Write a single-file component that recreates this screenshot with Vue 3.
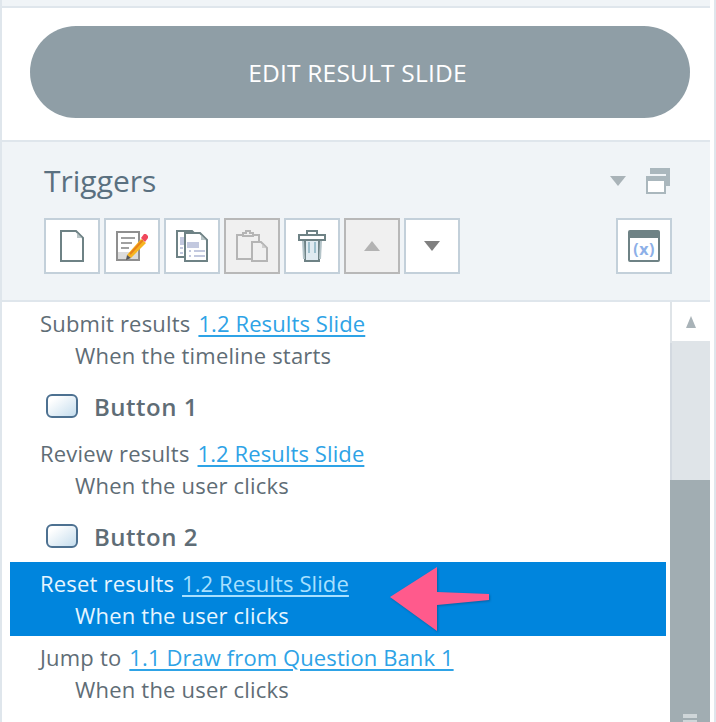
<template>
  <div class="panel">
    <div class="top-band"></div>
    <div class="edit-wrap">
      <button class="edit-btn">EDIT RESULT SLIDE</button>
    </div>

    <div class="triggers-head">
      <div class="title-row">
        <span class="title">Triggers</span>
        <div class="title-tools">
          <svg width="16" height="10" viewBox="0 0 16 10"><path d="M0 0h16L8 10z" fill="#a9b3b8" /></svg>
          <svg width="24" height="26" viewBox="0 0 24 26">
            <path d="M4 0h20v18h-4V6H4z" fill="#aab7bd" />
            <rect x="1" y="9" width="18" height="16" fill="#fff" stroke="#aab7bd" stroke-width="2" />
            <rect x="0" y="8" width="20" height="5" fill="#aab7bd" />
          </svg>
        </div>
      </div>
      <div class="toolbar">
        <div class="tool">
          <svg width="24" height="32" viewBox="0 0 24 32">
            <path d="M1 1h15l7 7v23H1z" fill="#fff" stroke="#6e8285" stroke-width="2" />
            <path d="M17 3v5h5z" fill="#b8c4c6" />
          </svg>
        </div>
        <div class="tool">
          <svg width="32" height="32" viewBox="0 0 32 32">
            <rect x="1" y="2" width="22" height="28" fill="#fff" stroke="#8f8f8f" stroke-width="2" />
            <path d="M5 8h14M5 13h11M5 18h8" stroke="#a0a0a0" stroke-width="2" />
            <rect x="2" y="22" width="20" height="7" fill="#dcdcdc" />
            <path d="M11 25L25 9l5 4-15 15z" fill="#f6b520" />
            <path d="M14 24L27 10" stroke="#e8811a" stroke-width="2" />
            <path d="M10 30l1-5 4 3z" fill="#555" />
            <path d="M25 8l3-4h2l2 2v2l-3 4z" fill="#f0485c" />
          </svg>
        </div>
        <div class="tool">
          <svg width="32" height="32" viewBox="0 0 32 32">
            <path d="M1 1h15l6 6v20H1z" fill="#fff" stroke="#6e8285" stroke-width="2" />
            <rect x="4" y="7" width="15" height="8" fill="#c3c9df" />
            <path d="M4 18h3M4 23h3" stroke="#c3c9df" stroke-width="2" />
            <path d="M9 3h15l7 7v21H9z" fill="#fff" stroke="#6e8285" stroke-width="2" />
            <path d="M25 5v5h5z" fill="#b8c4c6" />
            <rect x="11" y="12" width="12" height="6" fill="#c3c9df" />
            <path d="M13 21h2M18 21h11M13 26h2M18 26h11" stroke="#c3c9df" stroke-width="2" />
          </svg>
        </div>
        <div class="tool off">
          <svg width="32" height="32" viewBox="0 0 32 32">
            <path d="M1 5h22v24H1z" fill="none" stroke="#b5b5b5" stroke-width="2" />
            <path d="M7 5V3h3V1h4v2h3v3H7z" fill="#f0f0f0" stroke="#b5b5b5" stroke-width="2" />
            <path d="M16 12h9l6 6v13H16z" fill="#f0f0f0" stroke="#b5b5b5" stroke-width="2" />
            <path d="M26 14v4h4z" fill="#cfcfcf" />
          </svg>
        </div>
        <div class="tool">
          <svg width="28" height="32" viewBox="0 0 28 32">
            <path d="M9 5V1h10v4" fill="#fff" stroke="#6e8285" stroke-width="2" />
            <rect x="1" y="5" width="26" height="5" fill="#fff" stroke="#6e8285" stroke-width="2" />
            <path d="M7 10h14v21H7z" fill="#dfeaf0" stroke="#6e8285" stroke-width="2" />
            <path d="M5 11l1 18" stroke="#b4c4c9" stroke-width="2" />
            <path d="M23 11l-1 18" stroke="#b4c4c9" stroke-width="2" />
            <path d="M11 12v11M17 12v11" stroke="#9dbfcc" stroke-width="2" />
          </svg>
        </div>
        <div class="tool off">
          <svg width="16" height="10" viewBox="0 0 16 10"><path d="M0 10L8 0l8 10z" fill="#b3b3b3" /></svg>
        </div>
        <div class="tool">
          <svg width="16" height="10" viewBox="0 0 16 10"><path d="M0 0h16L8 10z" fill="#808080" /></svg>
        </div>
        <div class="tool var-tool">
          <div class="var-icon"><span>(x)</span></div>
        </div>
      </div>
    </div>

    <div class="list-area">
      <div class="list">
        <template v-for="(item, i) in items" :key="i">
          <div v-if="item.object" class="object-row">
            <svg width="32" height="24" viewBox="0 0 32 24">
              <defs>
                <linearGradient :id="'btn' + i" x1="0" y1="0" x2="1" y2="1">
                  <stop offset="0.2" stop-color="#ffffff" />
                  <stop offset="1" stop-color="#c2dbec" />
                </linearGradient>
              </defs>
              <rect x="1" y="1" width="30" height="22" rx="5" :fill="'url(#btn' + i + ')'" stroke="#4d7191" stroke-width="2" />
            </svg>
            <span>{{ item.object }}</span>
          </div>
          <div v-else class="trigger" :class="{ selected: item.selected }">
            <div class="line1">{{ item.action }} <a>{{ item.target }}</a></div>
            <div class="line2">{{ item.when }}</div>
          </div>
        </template>
      </div>
      <div class="scrollbar">
        <div class="scroll-up">
          <svg width="10" height="12" viewBox="0 0 10 12"><path d="M0 12L5 0l5 12z" fill="#a9b3b8" /></svg>
        </div>
        <div class="scroll-track"></div>
        <div class="scroll-thumb">
          <i></i><i></i>
        </div>
      </div>
      <svg class="arrow" width="112" height="72" viewBox="0 0 112 72">
        <path d="M6 33L53 3v25l52 2v6l-52 5v26z" fill="#ff5a8c" />
      </svg>
    </div>
  </div>
</template>

<script setup>
const items = [
  { action: 'Submit results', target: '1.2 Results Slide', when: 'When the timeline starts' },
  { object: 'Button 1' },
  { action: 'Review results', target: '1.2 Results Slide', when: 'When the user clicks' },
  { object: 'Button 2' },
  { action: 'Reset results', target: '1.2 Results Slide', when: 'When the user clicks', selected: true },
  { action: 'Jump to', target: '1.1 Draw from Question Bank 1', when: 'When the user clicks' }
]
</script>

<style>
html, body { margin: 0; background: #fff; }
</style>

<style scoped>
.panel {
  width: 716px;
  height: 722px;
  box-sizing: border-box;
  overflow: hidden;
  display: flex;
  flex-direction: column;
  background: #fff;
  border-left: 2px solid #dfe6ec;
  border-right: 2px solid #dfe6ec;
  padding-right: 4px;
  font-family: "Open Sans", "Liberation Sans", sans-serif;
}

.top-band {
  height: 6px;
  flex-shrink: 0;
  background: #f0f4f7;
  border-bottom: 2px solid #dfe6ec;
}

.edit-wrap {
  height: 134px;
  flex-shrink: 0;
  box-sizing: border-box;
  padding: 18px 20px 0 28px;
  border-bottom: 2px solid #dfe6ec;
}

.edit-btn {
  display: block;
  width: 660px;
  height: 92px;
  border: 0;
  padding: 0 5px 0 0;
  border-radius: 46px;
  background: #8f9ea6;
  color: #fff;
  font-family: inherit;
  font-size: 24.5px;
  font-weight: 500;
  letter-spacing: 0.2px;
}

.triggers-head {
  height: 160px;
  flex-shrink: 0;
  box-sizing: border-box;
  padding: 15px 38px 0 42px;
  background: #f0f4f7;
  border-bottom: 2px solid #dfe6ec;
}

.title-row {
  display: flex;
  align-items: center;
  justify-content: space-between;
  height: 46px;
  margin-bottom: 15px;
}

.title {
  font-size: 30px;
  color: #5a7080;
}

.title-tools {
  display: flex;
  align-items: center;
  gap: 20px;
  margin-right: 2px;
  padding-top: 2px;
}

.toolbar {
  display: flex;
  gap: 4px;
}

.tool {
  width: 56px;
  height: 56px;
  box-sizing: border-box;
  border: 2px solid #c3d0da;
  background: #fff;
  display: flex;
  align-items: center;
  justify-content: center;
}

.tool.off {
  background: #f0f0f0;
  border-color: #b8b8b8;
}

.var-tool {
  margin-left: auto;
}

.var-icon {
  width: 32px;
  height: 32px;
  box-sizing: border-box;
  border: 2px solid #6e8285;
  border-top-width: 8px;
  border-radius: 2px;
  display: flex;
  align-items: center;
  justify-content: center;
}

.var-icon span {
  font-size: 16px;
  letter-spacing: 0.5px;
  line-height: 20px;
  font-weight: 700;
  color: #8db0e8;
}

.list-area {
  position: relative;
  flex: 1;
  min-height: 0;
  display: flex;
}

.list {
  flex: 1;
  min-width: 0;
  padding-left: 8px;
  padding-right: 4px;
}

.trigger {
  padding: 5px 0 5px 30px;
  font-size: 22px;
  letter-spacing: 0.2px;
  line-height: 32px;
  color: #5f6d76;
  white-space: nowrap;
}

.trigger a {
  margin-left: 2px;
  color: #2ea3e6;
  letter-spacing: 0.1px;
  text-decoration: underline;
  text-decoration-thickness: 2px;
  text-underline-offset: 3px;
}

.line2 {
  padding-left: 35px;
}

.trigger.selected {
  background: #0085dd;
  color: #e6f5ff;
}

.trigger.selected a {
  color: #a8e0ff;
}

.object-row {
  height: 56px;
  box-sizing: border-box;
  padding: 18px 0 0 36px;
  display: flex;
  align-items: flex-start;
  gap: 16px;
  font-size: 24px;
  letter-spacing: 0.5px;
  line-height: 26px;
  font-weight: 600;
  color: #5f6d76;
}

.scrollbar {
  width: 40px;
  flex-shrink: 0;
  display: flex;
  flex-direction: column;
}

.scroll-up {
  height: 41px;
  flex-shrink: 0;
  box-sizing: border-box;
  background: #fff;
  border-left: 2px solid #dfe4e8;
  border-bottom: 2px solid #dfe4e8;
  display: flex;
  align-items: center;
  justify-content: center;
}

.scroll-track {
  height: 137px;
  flex-shrink: 0;
  box-sizing: border-box;
  background: #dfe4e8;
  border-left: 2px solid #d3d9e0;
}

.scroll-thumb {
  flex: 1;
  background: #a1adb2;
  display: flex;
  flex-direction: column;
  align-items: center;
  justify-content: flex-end;
  gap: 2px;
}

.scroll-thumb i {
  display: block;
  width: 14px;
  height: 4px;
  background: #cfd6d9;
}

.scroll-thumb i:last-child {
  height: 2px;
}

.arrow {
  position: absolute;
  left: 382px;
  top: 262px;
  filter: drop-shadow(1px 1px 1px rgba(0, 0, 0, 0.25));
}
</style>
